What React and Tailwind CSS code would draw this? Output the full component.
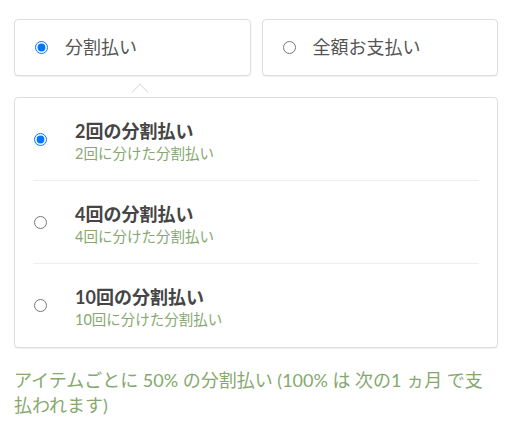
import { useState } from "react";

const plans = [
  { id: "2", title: "2回の分割払い", sub: "2回に分けた分割払い" },
  { id: "4", title: "4回の分割払い", sub: "4回に分けた分割払い" },
  { id: "10", title: "10回の分割払い", sub: "10回に分けた分割払い" },
];

function ModeCard({ label, checked, onSelect }) {
  return (
    <label className="flex h-[57px] flex-1 cursor-pointer items-center gap-[17px] rounded-[4px] border border-[#dedede] bg-white pl-[20px] shadow-[0_1px_1px_rgba(0,0,0,0.06)]">
      <input type="radio" name="mode" checked={checked} onChange={onSelect} className="h-[13px] w-[13px]" />
      <span className="text-[18px] text-[#555]">{label}</span>
    </label>
  );
}

export default function App() {
  const [mode, setMode] = useState("split");
  const [plan, setPlan] = useState("2");

  return (
    <div className="w-[510px] bg-white pl-[14px] pr-[12px] pt-[19px] font-['Lato','Noto_Sans_CJK_JP',sans-serif]">
      <div className="flex gap-[11px]">
        <ModeCard label="分割払い" checked={mode === "split"} onSelect={() => setMode("split")} />
        <ModeCard label="全額お支払い" checked={mode === "full"} onSelect={() => setMode("full")} />
      </div>

      <div className="relative mt-[21px] rounded-[4px] border border-[#dedede] bg-white shadow-[0_1px_1px_rgba(0,0,0,0.06)]">
        {/* little pointer above the panel */}
        <div className="absolute left-[119px] top-[-12px] h-[12px] w-[12px] rotate-45 border-l border-t border-[#dedede]" />
        {plans.map((p, i) => (
          <label
            key={p.id}
            className={`mx-[18px] flex h-[83px] cursor-pointer items-center ${i < plans.length - 1 ? "border-b border-[#eeeeee]" : ""}`}
          >
            <input
              type="radio"
              name="plan"
              checked={plan === p.id}
              onChange={() => setPlan(p.id)}
              className="ml-px h-[13px] w-[13px]"
            />
            <span className="ml-[28px] flex flex-col pt-[4px]">
              <span className="text-[18px] font-bold leading-[24px] text-[#454545]">{p.title}</span>
              <span className="text-[14.5px] leading-[21px] text-[#86a86f]">{p.sub}</span>
            </span>
          </label>
        ))}
      </div>

      <p className="mt-[20px] text-[18px] leading-[25px] text-[#86a86f]">
        アイテムごとに 50% の分割払い (100% は 次の1 ヵ月 で支払われます)
      </p>
    </div>
  );
}
